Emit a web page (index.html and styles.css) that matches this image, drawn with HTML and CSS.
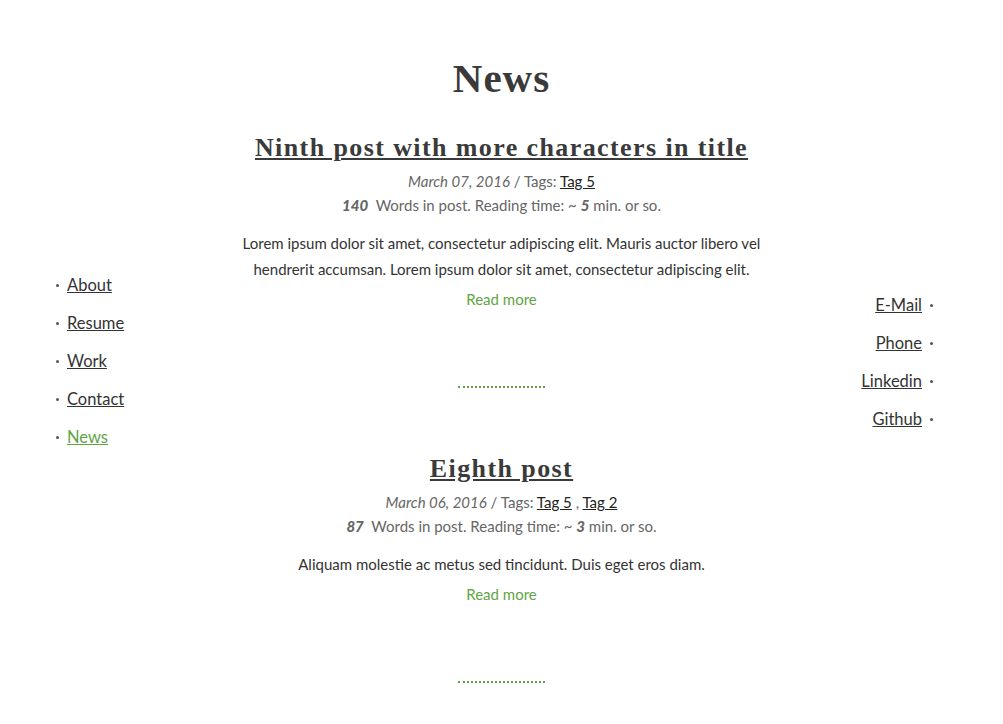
FILE: index.html
```html
<!DOCTYPE html>
<html>
<head>
<meta charset="utf-8">
<title>News</title>
<link rel="stylesheet" href="styles.css">
</head>
<body>
<div class="layout">
  <aside class="side side-left">
    <ul class="nav nav-left">
      <li><a href="#">About</a></li>
      <li><a href="#">Resume</a></li>
      <li><a href="#">Work</a></li>
      <li><a href="#">Contact</a></li>
      <li><a href="#" class="active">News</a></li>
    </ul>
  </aside>
  <main class="main">
    <h1 class="page-title">News</h1>
    <article class="post">
      <h2 class="post-title"><a href="#">Ninth post with more characters in title</a></h2>
      <p class="meta"><em>March 07, 2016</em> / Tags: <a href="#">Tag 5</a></p>
      <p class="meta"><b>140</b>&nbsp; Words in post. Reading time: ~ <b>5</b> min. or so.</p>
      <p class="excerpt">Lorem ipsum dolor sit amet, consectetur adipiscing elit. Mauris auctor libero vel hendrerit accumsan. Lorem ipsum dolor sit amet, consectetur adipiscing elit.</p>
      <a class="more" href="#">Read more</a>
      <div class="sep"></div>
    </article>
    <article class="post">
      <h2 class="post-title"><a href="#">Eighth post</a></h2>
      <p class="meta"><em>March 06, 2016</em> / Tags: <a href="#">Tag 5</a> , <a href="#">Tag 2</a></p>
      <p class="meta"><b>87</b>&nbsp; Words in post. Reading time: ~ <b>3</b> min. or so.</p>
      <p class="excerpt">Aliquam molestie ac metus sed tincidunt. Duis eget eros diam.</p>
      <a class="more" href="#">Read more</a>
      <div class="sep"></div>
    </article>
  </main>
  <aside class="side side-right">
    <ul class="nav nav-right">
      <li><a href="#">E-Mail</a></li>
      <li><a href="#">Phone</a></li>
      <li><a href="#">Linkedin</a></li>
      <li><a href="#">Github</a></li>
    </ul>
  </aside>
</div>
</body>
</html>
```

FILE: styles.css
```css
html, body {
  margin: 0;
  padding: 0;
  background: #ffffff;
}
body {
  font-family: "Lato", "Liberation Sans", sans-serif;
  font-size: 15px;
  color: #333333;
}
a {
  color: #333333;
}
.layout {
  display: grid;
  grid-template-columns: 1fr 560px 1fr;
  align-items: start;
}
.side {
  position: sticky;
  top: 0;
  height: 100vh;
  display: flex;
  align-items: center;
}
.side-left {
  justify-content: flex-start;
  padding-left: 56px;
}
.side-right {
  justify-content: flex-end;
  padding-right: 70px;
}
.nav {
  list-style: none;
  margin: 0;
  padding: 0;
  display: flex;
  flex-direction: column;
  gap: 16px;
  font-size: 16.5px;
  line-height: 22px;
}
.nav-left {
  margin-top: -2px;
}
.nav li {
  display: flex;
  align-items: center;
  gap: 8px;
}
.nav-right li {
  justify-content: flex-end;
}
.nav li::before {
  content: "";
  width: 3px;
  height: 3px;
  border-radius: 50%;
  background: #555555;
}
.nav-right li::before {
  order: 2;
}
.nav a {
  color: #333333;
}
.nav a.active {
  color: #5fa544;
}
.main {
  text-align: center;
  padding-top: 55px;
}
.page-title {
  margin: 0 0 32px;
  font-family: "Liberation Serif", serif;
  font-weight: bold;
  font-size: 41px;
  line-height: 46px;
  color: #3a3a3a;
  letter-spacing: 1px;
}
.post-title {
  margin: 0 0 6px;
  font-family: "Liberation Serif", serif;
  font-weight: bold;
  font-size: 26px;
  line-height: 30px;
  letter-spacing: 1.4px;
}
.post-title a {
  color: #3a3a3a;
}
.meta {
  margin: 0;
  line-height: 24px;
  color: #666666;
}
.meta em {
  font-style: italic;
}
.meta b {
  font-weight: 900;
  font-style: italic;
}
.meta a {
  color: #222222;
}
.excerpt {
  margin: 13px 0 5px;
  line-height: 26px;
  color: #333333;
}
.more {
  display: inline-block;
  color: #5fa544;
  text-decoration: none;
  line-height: 24px;
}
.sep {
  width: 87px;
  margin: 75px auto 66px;
  border-top: 2px dotted #5fa544;
}
```
